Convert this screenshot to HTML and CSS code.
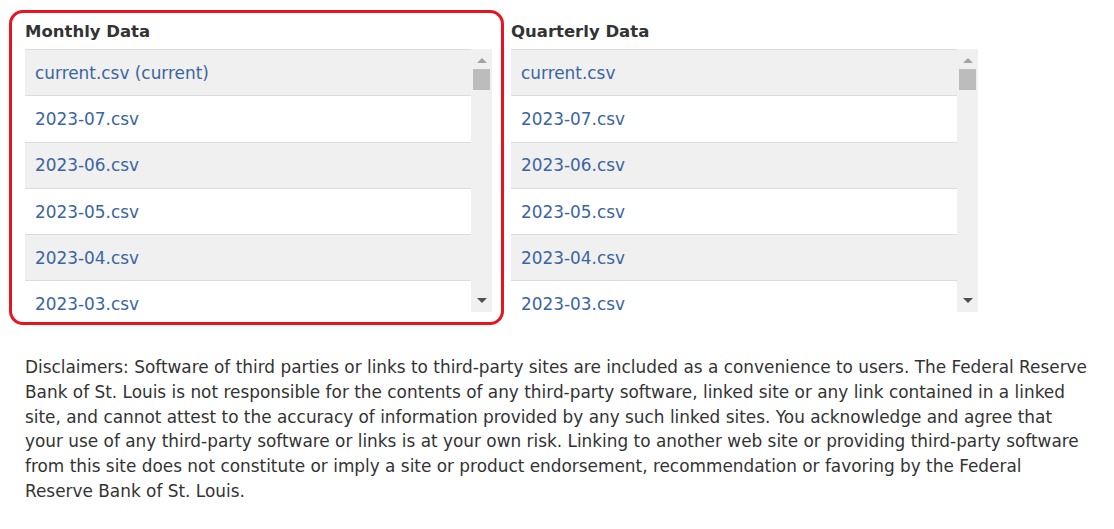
FILE: index.html
```html
<!DOCTYPE html>
<html lang="en">
<head>
<meta charset="utf-8">
<title>Data Files</title>
<link rel="stylesheet" href="styles.css">
</head>
<body>
<div class="page">
  <div class="columns">
    <section class="col col-highlight">
      <h3 class="col-title">Monthly Data</h3>
      <div class="listbox">
        <ul class="files">
          <li class="file odd"><a href="#">current.csv (current)</a></li>
          <li class="file"><a href="#">2023-07.csv</a></li>
          <li class="file odd"><a href="#">2023-06.csv</a></li>
          <li class="file"><a href="#">2023-05.csv</a></li>
          <li class="file odd"><a href="#">2023-04.csv</a></li>
          <li class="file"><a href="#">2023-03.csv</a></li>
        </ul>
        <div class="scrollbar">
          <span class="arrow arrow-up"></span>
          <span class="thumb"></span>
          <span class="track-fill"></span>
          <span class="arrow arrow-down"></span>
        </div>
      </div>
    </section>
    <section class="col">
      <h3 class="col-title">Quarterly Data</h3>
      <div class="listbox">
        <ul class="files">
          <li class="file odd"><a href="#">current.csv</a></li>
          <li class="file"><a href="#">2023-07.csv</a></li>
          <li class="file odd"><a href="#">2023-06.csv</a></li>
          <li class="file"><a href="#">2023-05.csv</a></li>
          <li class="file odd"><a href="#">2023-04.csv</a></li>
          <li class="file"><a href="#">2023-03.csv</a></li>
        </ul>
        <div class="scrollbar">
          <span class="arrow arrow-up"></span>
          <span class="thumb"></span>
          <span class="track-fill"></span>
          <span class="arrow arrow-down"></span>
        </div>
      </div>
    </section>
  </div>
  <p class="disclaimer">Disclaimers: Software of third parties or links to third-party sites are included as a convenience to users. The Federal Reserve Bank of St. Louis is not responsible for the contents of any third-party software, linked site or any link contained in a linked site, and cannot attest to the accuracy of information provided by any such linked sites. You acknowledge and agree that your use of any third-party software or links is at your own risk. Linking to another web site or providing third-party software from this site does not constitute or imply a site or product endorsement, recommendation or favoring by the Federal Reserve Bank of St. Louis.</p>
</div>
</body>
</html>
```

FILE: styles.css
```css
html, body {
  margin: 0;
  padding: 0;
  background: #ffffff;
}

body {
  font-family: "DejaVu Sans", Verdana, sans-serif;
  font-size: 16.9px;
  color: #333333;
}

.page {
  padding: 20px 26px 0 25px;
}

.columns {
  display: flex;
  gap: 19px;
}

.col {
  position: relative;
  width: 467px;
  display: flex;
  flex-direction: column;
}

.col-highlight::before {
  content: "";
  position: absolute;
  top: -10px;
  left: -16px;
  right: -12px;
  bottom: -13px;
  border: 3px solid #e8141f;
  border-radius: 14px;
  pointer-events: none;
}

.col-title {
  margin: 0;
  font-size: 16.5px;
  font-weight: bold;
  line-height: 24px;
  height: 29px;
  color: #333333;
}

.listbox {
  display: flex;
  height: 263px;
  overflow: hidden;
}

.files {
  list-style: none;
  margin: 0;
  padding: 0;
  flex: 1;
  min-width: 0;
}

.file {
  height: 45.3px;
  border-top: 1px solid #dcdcdc;
  display: flex;
  align-items: center;
  padding: 0 10px;
  background: #ffffff;
}

.file.odd {
  background: #f0f0f0;
}

.file a {
  color: #3a65a0;
  text-decoration: none;
  line-height: 16px;
}

.scrollbar {
  width: 21px;
  flex: none;
  background: #f0f0f0;
  display: flex;
  flex-direction: column;
  align-items: center;
}

.arrow {
  width: 0;
  height: 0;
  border-left: 5px solid transparent;
  border-right: 5px solid transparent;
}

.arrow-up {
  margin-top: 9px;
  border-bottom: 5px solid #a3a3a3;
}

.thumb {
  margin-top: 6px;
  width: 17px;
  height: 21px;
  background: #bcbcbc;
}

.track-fill {
  flex: 1;
}

.arrow-down {
  margin-bottom: 9px;
  border-top: 5px solid #505050;
}

.disclaimer {
  margin: 43px 0 0 0;
  line-height: 24.8px;
  color: #333333;
}
```
